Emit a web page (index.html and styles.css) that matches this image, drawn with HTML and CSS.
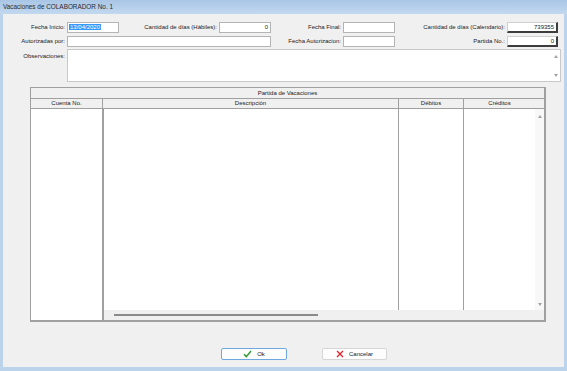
FILE: index.html
```html
<!DOCTYPE html>
<html lang="es">
<head>
    <meta charset="UTF-8">
    <meta name="viewport" content="width=device-width, initial-scale=1.0">
    <title>Vacaciones de COLABORADOR No. 1</title>
    <link rel="stylesheet" href="styles.css">
</head>
<body>
    <div class="window">
        <div class="titlebar">Vacaciones de COLABORADOR No. 1</div>

        <div class="client">
            <!-- Campos del encabezado -->
            <div class="fields">
                <label class="lbl first">Fecha Inicio:</label>
                <div class="txt"><span class="sel">13/04/2020</span></div>
                <label class="lbl">Cantidad de días (Hábiles):</label>
                <div class="txt num">0</div>
                <label class="lbl">Fecha Final:</label>
                <div class="txt"></div>
                <label class="lbl">Cantidad de días (Calendario):</label>
                <div class="txt num sunken">739355</div>

                <label class="lbl first">Autorizadas por:</label>
                <div class="txt wide"></div>
                <label class="lbl">Fecha Autorizacion:</label>
                <div class="txt"></div>
                <label class="lbl">Partida No.:</label>
                <div class="txt num sunken">0</div>

                <label class="lbl lbl-top first">Observaciones:</label>
                <div class="memo">
                    <div class="memo-scroll">
                        <span class="arrow-up"></span>
                        <span class="arrow-down"></span>
                    </div>
                </div>
            </div>

            <!-- Grid de la partida -->
            <div class="grid">
                <div class="grid-caption">Partida de Vacaciones</div>
                <div class="grid-head">
                    <div class="hcell col-cuenta">Cuenta No.</div>
                    <div class="hcell col-desc">Descripción</div>
                    <div class="hcell col-deb">Débitos</div>
                    <div class="hcell col-cred">Créditos</div>
                    <div class="hcell col-corner"></div>
                </div>
                <div class="grid-body">
                    <div class="frozen"></div>
                    <div class="scroll-area">
                        <div class="rows">
                            <div class="bcell col-desc"></div>
                            <div class="bcell col-deb"></div>
                            <div class="bcell col-cred"></div>
                            <div class="vscroll">
                                <span class="arrow-up"></span>
                                <span class="arrow-down"></span>
                            </div>
                        </div>
                        <div class="hscroll"><div class="hthumb"></div></div>
                    </div>
                </div>
            </div>

            <div class="buttons">
                <button class="btn btn-default">
                    <svg width="9" height="8" viewBox="0 0 9 8"><polyline points="1,4.2 3.3,6.6 8,1" fill="none" stroke="#2a9a2a" stroke-width="1.4"/></svg>
                    Ok
                </button>
                <button class="btn">
                    <svg width="8" height="8" viewBox="0 0 8 8"><path d="M1 1 L7 7 M7 1 L1 7" stroke="#e0202a" stroke-width="1.3"/></svg>
                    Cancelar
                </button>
            </div>
        </div>
    </div>
</body>
</html>
```

FILE: styles.css
```css
body {
    margin: 0;
    font-family: "Liberation Sans", Arial, sans-serif;
    color: #222;
}

.window {
    width: 567px;
    height: 371px;
    box-sizing: border-box;
    display: flex;
    flex-direction: column;
    background: #bcd3ec;
    padding: 0 3px 4px 3px;
}

.titlebar {
    height: 14px;
    margin: 0 -3px;
    padding-left: 3px;
    background: linear-gradient(#a9c6e6, #c2d8ef);
    font-size: 6.4px;
    line-height: 14px;
    color: #2a2a2a;
}

.client {
    flex: 1;
    background: #f0f0f0;
    padding-top: 8px;
    font-size: 6px;
}

/* fila de campos */
.fields {
    display: grid;
    grid-template-columns: 64px 52px 100px 52px 72px 52px 112px 51px 3px;
    grid-template-rows: 11px 11px 32px;
    row-gap: 3px;
}

.lbl {
    text-align: right;
    padding-right: 2px;
    line-height: 11px;
    white-space: nowrap;
}

.lbl.first {
    grid-column: 1;
}

.lbl-top {
    line-height: 12px;
}

.txt {
    background: #fff;
    border: 1px solid #b4b4b4;
    line-height: 9px;
    padding: 0 1px;
    overflow: hidden;
    white-space: nowrap;
}

.txt.wide {
    grid-column: 2 / span 3;
}

.txt.num {
    text-align: right;
    padding-right: 2px;
}

.txt.sunken {
    border-color: #d0d0d0 #3c3c3c #3c3c3c #d0d0d0;
    border-width: 1px 2px 2px 1px;
    line-height: 8px;
}

.sel {
    background: #3399ff;
    color: #fff;
    padding: 0 1px;
}

.memo {
    grid-column: 2 / -1;
    margin-top: -1px;
    background: #fff;
    border: 1px solid #c8c8c8;
    display: flex;
    justify-content: flex-end;
}

.memo-scroll {
    width: 9px;
    display: flex;
    flex-direction: column;
    justify-content: space-between;
    align-items: center;
    padding: 5px 0 4px;
}

.arrow-up {
    width: 0;
    height: 0;
    border-left: 2.5px solid transparent;
    border-right: 2.5px solid transparent;
    border-bottom: 3px solid #a3a3a3;
}

.arrow-down {
    width: 0;
    height: 0;
    border-left: 2.5px solid transparent;
    border-right: 2.5px solid transparent;
    border-top: 3px solid #a3a3a3;
}

/* grid */
.grid {
    width: 516px;
    height: 235px;
    box-sizing: border-box;
    margin: 5px 0 0 27px;
    border: 1px solid #a0a0a0;
    border-right-width: 2px;
    border-bottom-width: 2px;
    display: flex;
    flex-direction: column;
    background: #f0f0f0;
}

.grid-caption {
    height: 10px;
    line-height: 10px;
    text-align: center;
    border-bottom: 1px solid #a0a0a0;
}

.grid-head {
    display: flex;
    height: 9px;
    line-height: 9px;
    border-bottom: 1px solid #a0a0a0;
}

.hcell {
    box-sizing: border-box;
    text-align: center;
    border-right: 1px solid #a0a0a0;
}

.col-cuenta { width: 72px; }
.col-desc { width: 296px; }
.col-deb { width: 65px; }
.col-cred { width: 71px; }
.hcell.col-cred, .hcell.col-corner { border-right: 0; }
.col-corner { flex: 1; }

.grid-body {
    flex: 1;
    display: flex;
}

.frozen {
    width: 71px;
    background: #fff;
    border-right: 2px solid #a0a0a0;
}

.scroll-area {
    flex: 1;
    display: flex;
    flex-direction: column;
}

.rows {
    flex: 1;
    display: flex;
    background: #fff;
}

.bcell {
    box-sizing: border-box;
    border-right: 1px solid #a0a0a0;
}

.rows .col-desc { width: 295px; }
.rows .col-cred { border-right: 0; }

.vscroll {
    flex: 1;
    background: #f8f8f8;
    display: flex;
    flex-direction: column;
    justify-content: space-between;
    align-items: center;
    padding: 6px 0 4px;
}

.hscroll {
    height: 10px;
    background: #f0f0f0;
    display: flex;
    align-items: center;
    padding-left: 10px;
}

.hthumb {
    width: 204px;
    height: 2px;
    background: #8a8a8a;
}

/* botones */
.buttons {
    display: flex;
    gap: 35px;
    margin-top: 26px;
    padding-left: 218px;
}

.btn {
    height: 12px;
    padding: 0;
    font-family: inherit;
    font-size: 6px;
    color: #222;
    background: #fdfdfd;
    border: 1px solid #d6d6d6;
    border-radius: 2px;
    display: flex;
    align-items: center;
    justify-content: center;
    gap: 5px;
    width: 65px;
}

.btn-default {
    width: 66px;
    border-color: #6fa8e0;
}
```
